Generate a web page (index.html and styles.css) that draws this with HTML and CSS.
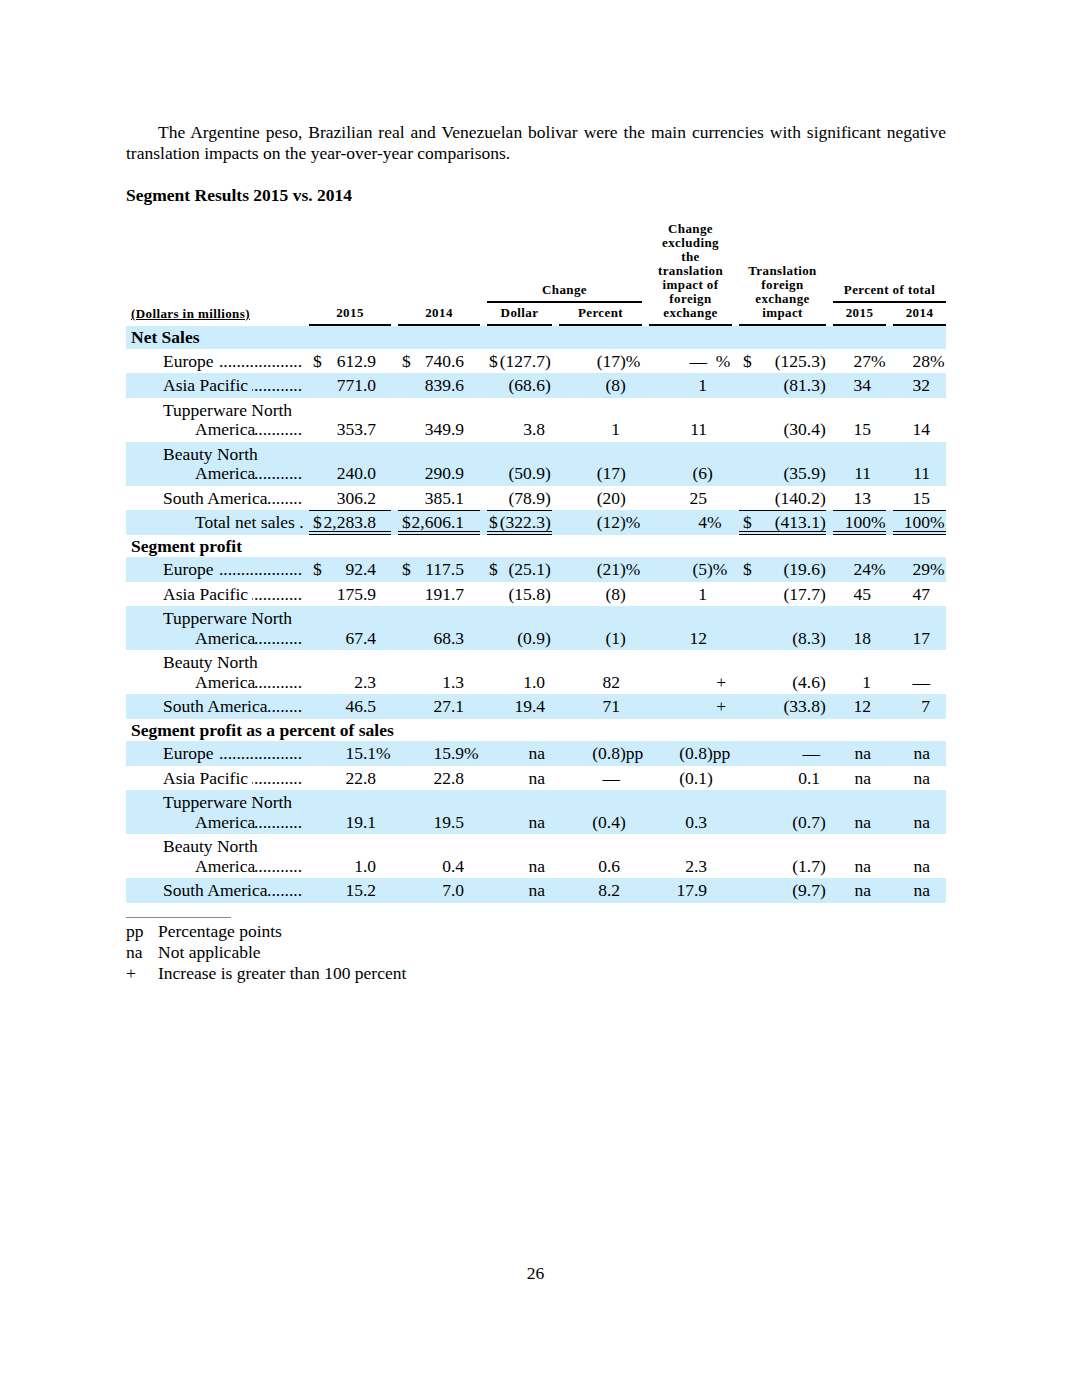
FILE: index.html
```html
<!DOCTYPE html>
<html lang="en">

<head>
    <meta charset="UTF-8">
    <meta name="viewport" content="width=device-width, initial-scale=1.0">
    <title>Segment Results 2015 vs. 2014</title>
    <link rel="stylesheet" href="styles.css">
</head>

<body>
    <div class="page">
        <p class="intro">The Argentine peso, Brazilian real and Venezuelan bolivar were the main currencies with significant negative translation impacts on the year-over-year comparisons.</p>

        <h2 class="title">Segment Results 2015 vs. 2014</h2>

        <table class="seg">
            <colgroup>
                <col class="w-lbl">
                <col class="w-89">
                <col class="w-89">
                <col class="w-72">
                <col class="w-90">
                <col class="w-90">
                <col class="w-94">
                <col class="w-60">
                <col class="w-60">
            </colgroup>
            <thead>
                <tr class="h1">
                    <th rowspan="2" class="th-lbl"><span class="u">(Dollars in millions)</span></th>
                    <th rowspan="2"><div class="hd">2015</div></th>
                    <th rowspan="2"><div class="hd">2014</div></th>
                    <th colspan="2"><div class="hd">Change</div></th>
                    <th rowspan="2"><div class="hd">Change<br>excluding<br>the<br>translation<br>impact of<br>foreign<br>exchange</div></th>
                    <th rowspan="2"><div class="hd">Translation<br>foreign<br>exchange<br>impact</div></th>
                    <th colspan="2"><div class="hd">Percent of total</div></th>
                </tr>
                <tr class="h2">
                    <th class="r2"><div class="hd">Dollar</div></th>
                    <th class="r2"><div class="hd">Percent</div></th>
                    <th class="r2"><div class="hd">2015</div></th>
                    <th class="r2"><div class="hd">2014</div></th>
                </tr>
            </thead>
            <tbody>
                <!-- Net sales -->
                <tr class="b">
                    <td colspan="9" class="sec">Net Sales</td>
                </tr>
                <tr class="r">
                    <td class="lbl"><div class="ld"><span>Europe&nbsp;</span><span class="dots"></span></div></td>
                    <td><span class="cur">$</span>612.9</td>
                    <td><span class="cur">$</span>740.6</td>
                    <td><span class="cur">$</span>(127.7<span class="h">)</span></td>
                    <td>(17<span class="h">)%</span></td>
                    <td>—<span class="h">&nbsp;&nbsp;%</span></td>
                    <td><span class="cur">$</span>(125.3<span class="h">)</span></td>
                    <td>27<span class="h">%</span></td>
                    <td>28<span class="h">%</span></td>
                </tr>
                <tr class="r b">
                    <td class="lbl"><div class="ld"><span>Asia Pacific&nbsp;</span><span class="dots"></span></div></td>
                    <td>771.0</td>
                    <td>839.6</td>
                    <td>(68.6<span class="h">)</span></td>
                    <td>(8<span class="h">)</span></td>
                    <td>1</td>
                    <td>(81.3<span class="h">)</span></td>
                    <td>34</td>
                    <td>32</td>
                </tr>
                <tr class="r">
                    <td class="lbl">Tupperware North<div class="ld ind"><span>America</span><span class="dots"></span></div></td>
                    <td>353.7</td>
                    <td>349.9</td>
                    <td>3.8</td>
                    <td>1</td>
                    <td>11</td>
                    <td>(30.4<span class="h">)</span></td>
                    <td>15</td>
                    <td>14</td>
                </tr>
                <tr class="r b">
                    <td class="lbl">Beauty North<div class="ld ind"><span>America</span><span class="dots"></span></div></td>
                    <td>240.0</td>
                    <td>290.9</td>
                    <td>(50.9<span class="h">)</span></td>
                    <td>(17<span class="h">)</span></td>
                    <td>(6<span class="h">)</span></td>
                    <td>(35.9<span class="h">)</span></td>
                    <td>11</td>
                    <td>11</td>
                </tr>
                <tr class="r">
                    <td class="lbl"><div class="ld"><span>South America</span><span class="dots"></span></div></td>
                    <td>306.2</td>
                    <td>385.1</td>
                    <td>(78.9<span class="h">)</span></td>
                    <td>(20<span class="h">)</span></td>
                    <td>25</td>
                    <td>(140.2<span class="h">)</span></td>
                    <td>13</td>
                    <td>15</td>
                </tr>
                <tr class="r b total">
                    <td class="lbl tot-lbl">Total net sales .</td>
                    <td class="ul"><span class="cur">$</span>2,283.8</td>
                    <td class="ul"><span class="cur">$</span>2,606.1</td>
                    <td class="ul"><span class="cur">$</span>(322.3<span class="h">)</span></td>
                    <td>(12<span class="h">)%</span></td>
                    <td>4<span class="h">%</span></td>
                    <td class="ul"><span class="cur">$</span>(413.1<span class="h">)</span></td>
                    <td class="ul">100<span class="h">%</span></td>
                    <td class="ul">100<span class="h">%</span></td>
                </tr>

                <!-- Segment profit -->
                <tr>
                    <td colspan="9" class="sec">Segment profit</td>
                </tr>
                <tr class="r b">
                    <td class="lbl"><div class="ld"><span>Europe&nbsp;</span><span class="dots"></span></div></td>
                    <td><span class="cur">$</span>92.4</td>
                    <td><span class="cur">$</span>117.5</td>
                    <td><span class="cur">$</span>(25.1<span class="h">)</span></td>
                    <td>(21<span class="h">)%</span></td>
                    <td>(5<span class="h">)%</span></td>
                    <td><span class="cur">$</span>(19.6<span class="h">)</span></td>
                    <td>24<span class="h">%</span></td>
                    <td>29<span class="h">%</span></td>
                </tr>
                <tr class="r">
                    <td class="lbl"><div class="ld"><span>Asia Pacific&nbsp;</span><span class="dots"></span></div></td>
                    <td>175.9</td>
                    <td>191.7</td>
                    <td>(15.8<span class="h">)</span></td>
                    <td>(8<span class="h">)</span></td>
                    <td>1</td>
                    <td>(17.7<span class="h">)</span></td>
                    <td>45</td>
                    <td>47</td>
                </tr>
                <tr class="r b">
                    <td class="lbl">Tupperware North<div class="ld ind"><span>America</span><span class="dots"></span></div></td>
                    <td>67.4</td>
                    <td>68.3</td>
                    <td>(0.9<span class="h">)</span></td>
                    <td>(1<span class="h">)</span></td>
                    <td>12</td>
                    <td>(8.3<span class="h">)</span></td>
                    <td>18</td>
                    <td>17</td>
                </tr>
                <tr class="r">
                    <td class="lbl">Beauty North<div class="ld ind"><span>America</span><span class="dots"></span></div></td>
                    <td>2.3</td>
                    <td>1.3</td>
                    <td>1.0</td>
                    <td>82</td>
                    <td class="plus">+</td>
                    <td>(4.6<span class="h">)</span></td>
                    <td>1</td>
                    <td>—</td>
                </tr>
                <tr class="r b">
                    <td class="lbl"><div class="ld"><span>South America</span><span class="dots"></span></div></td>
                    <td>46.5</td>
                    <td>27.1</td>
                    <td>19.4</td>
                    <td>71</td>
                    <td class="plus">+</td>
                    <td>(33.8<span class="h">)</span></td>
                    <td>12</td>
                    <td>7</td>
                </tr>

                <!-- Segment profit as a percent of sales -->
                <tr>
                    <td colspan="9" class="sec">Segment profit as a percent of sales</td>
                </tr>
                <tr class="r b">
                    <td class="lbl"><div class="ld"><span>Europe&nbsp;</span><span class="dots"></span></div></td>
                    <td>15.1<span class="h">%</span></td>
                    <td>15.9<span class="h">%</span></td>
                    <td>na</td>
                    <td>(0.8<span class="h">)pp</span></td>
                    <td>(0.8<span class="h">)pp</span></td>
                    <td>—</td>
                    <td>na</td>
                    <td>na</td>
                </tr>
                <tr class="r">
                    <td class="lbl"><div class="ld"><span>Asia Pacific&nbsp;</span><span class="dots"></span></div></td>
                    <td>22.8</td>
                    <td>22.8</td>
                    <td>na</td>
                    <td>—</td>
                    <td>(0.1<span class="h">)</span></td>
                    <td>0.1</td>
                    <td>na</td>
                    <td>na</td>
                </tr>
                <tr class="r b">
                    <td class="lbl">Tupperware North<div class="ld ind"><span>America</span><span class="dots"></span></div></td>
                    <td>19.1</td>
                    <td>19.5</td>
                    <td>na</td>
                    <td>(0.4<span class="h">)</span></td>
                    <td>0.3</td>
                    <td>(0.7<span class="h">)</span></td>
                    <td>na</td>
                    <td>na</td>
                </tr>
                <tr class="r">
                    <td class="lbl">Beauty North<div class="ld ind"><span>America</span><span class="dots"></span></div></td>
                    <td>1.0</td>
                    <td>0.4</td>
                    <td>na</td>
                    <td>0.6</td>
                    <td>2.3</td>
                    <td>(1.7<span class="h">)</span></td>
                    <td>na</td>
                    <td>na</td>
                </tr>
                <tr class="r b">
                    <td class="lbl"><div class="ld"><span>South America</span><span class="dots"></span></div></td>
                    <td>15.2</td>
                    <td>7.0</td>
                    <td>na</td>
                    <td>8.2</td>
                    <td>17.9</td>
                    <td>(9.7<span class="h">)</span></td>
                    <td>na</td>
                    <td>na</td>
                </tr>
            </tbody>
        </table>

        <div class="rule"></div>
        <div class="notes">
            <span>pp</span><span>Percentage points</span>
            <span>na</span><span>Not applicable</span>
            <span>+</span><span>Increase is greater than 100 percent</span>
        </div>

        <div class="pagenum">26</div>
    </div>
</body>

</html>
```

FILE: styles.css
```css
body {
    margin: 0;
    font-family: "Liberation Serif", "Times New Roman", serif;
    color: #000;
}

.page {
    width: 820px;
    padding: 122px 125px 0 126px;
}

.intro {
    margin: 0;
    font-size: 17.5px;
    line-height: 21px;
    text-indent: 32px;
    text-align: justify;
}

.title {
    margin: 21px 0 0;
    font-size: 17.5px;
    line-height: 21px;
    font-weight: bold;
}

/* table */
.seg {
    margin-top: 16px;
    width: 820px;
    border-collapse: collapse;
    table-layout: fixed;
    font-size: 17.5px;
    line-height: 19.5px;
}

.w-lbl { width: 176px; }
.w-89 { width: 89px; }
.w-72 { width: 72px; }
.w-90 { width: 90px; }
.w-94 { width: 94px; }
.w-60 { width: 60px; }

.seg tr.h1 {
    height: 81px;
}

.seg tr.h2 {
    height: 23px;
}

.seg th {
    padding: 0 0 0 7px;
    font-size: 13px;
    line-height: 14px;
    letter-spacing: 0.4px;
    font-weight: bold;
    text-align: center;
    vertical-align: bottom;
}

.seg th.r2 {
    padding-top: 3px;
}

.seg th .hd {
    border-bottom: 2px solid #000;
    padding-bottom: 4px;
}

.seg th.th-lbl {
    padding: 0 0 5px 5px;
    text-align: left;
}

.u {
    text-decoration: underline;
}

.b {
    background-color: #cdedfc;
}

.seg td {
    padding: 3px 0 2px 11px;
    vertical-align: bottom;
    text-align: right;
    white-space: nowrap;
}

.seg td.sec {
    padding: 2px 5px 1px;
    text-align: left;
    font-weight: bold;
}

.seg td.lbl {
    padding-left: 37px;
    text-align: left;
}

.seg td.tot-lbl {
    padding-left: 69px;
}

.ld {
    display: flex;
}

.ld.ind {
    padding-left: 32px;
}

.dots {
    flex: 1;
    overflow: hidden;
    direction: rtl;
}

.dots::after {
    content: "..............................................................";
}

.cur {
    float: left;
}

.h {
    display: inline-block;
    width: 0;
    text-align: left;
    white-space: nowrap;
}

/* where the digits end in each column */
.r td:nth-child(2) { padding-right: 15px; }
.r td:nth-child(3) { padding-right: 16px; }
.r td:nth-child(4) { padding-right: 7px; padding-left: 9px; }
.r td:nth-child(5) { padding-right: 22px; }
.r td:nth-child(6) { padding-right: 25px; }
.r td:nth-child(7) { padding-right: 6px; }
.r td:nth-child(8) { padding-right: 15px; }
.r td:nth-child(9) { padding-right: 16px; }

.r td.plus {
    padding-right: 6px;
}

/* total row: single rule above, double rule below */
.total td.ul {
    background-image: linear-gradient(#000, #000), linear-gradient(#000, #000), linear-gradient(#000, #000);
    background-size: calc(100% - 7px) 1px;
    background-position: 7px 0, 7px calc(100% - 3px), 7px 100%;
    background-repeat: no-repeat;
}

/* footnotes */
.rule {
    margin-top: 14px;
    width: 105px;
    border-top: 1px solid #888;
}

.notes {
    padding-top: 3px;
    display: grid;
    grid-template-columns: 32px auto;
    font-size: 17.5px;
    line-height: 21px;
}

.pagenum {
    margin-top: 279px;
    text-align: center;
    font-size: 17.5px;
    line-height: 21px;
    padding-right: 1px;
}
```
